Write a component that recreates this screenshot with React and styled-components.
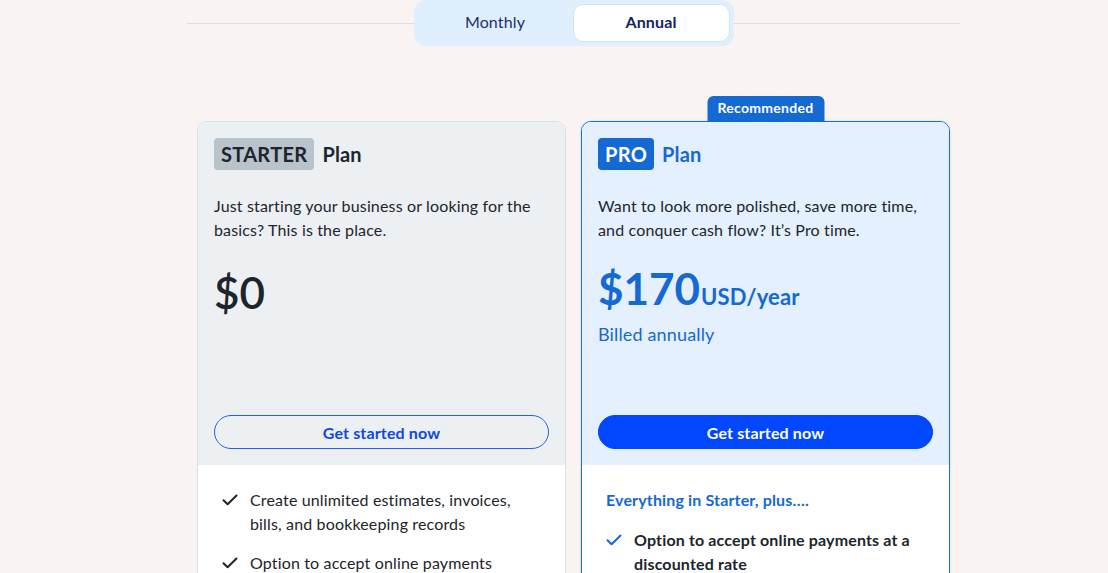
import React from "react";
import styled, { createGlobalStyle } from "styled-components";

const Global = createGlobalStyle`
  html, body { margin: 0; padding: 0; overflow: hidden; }
  body {
    background: #f9f4f1;
    font-family: Lato, "Noto Sans", sans-serif;
    color: #1c252c;
    letter-spacing: 0.15px;
  }
  * { box-sizing: border-box; }
`;

const Page = styled.div`
  width: 773px;
  margin-left: 187px;
`;

const ToggleRow = styled.div`
  display: flex;
  align-items: center;
  height: 46px;
`;

const Rule = styled.div`
  flex: 1;
  height: 1px;
  background: #d3e0ec;
`;

const Toggle = styled.div`
  display: flex;
  width: 320px;
  height: 46px;
  padding: 4px;
  background: #dfeffd;
  border-radius: 12px;
`;

const ToggleOption = styled.button`
  flex: 1;
  padding: 0 0 3px;
  border: ${(p) => (p.$active ? "1px solid #d3e3f1" : "none")};
  background: ${(p) => (p.$active ? "#ffffff" : "transparent")};
  box-shadow: ${(p) => (p.$active ? "0 0 0 1px #e3eef8" : "none")};
  border-radius: 10px;
  font-family: inherit;
  letter-spacing: inherit;
  font-size: 16px;
  font-weight: ${(p) => (p.$active ? 700 : 400)};
  color: ${(p) => (p.$active ? "#16245e" : "#1f2d6a")};
  cursor: pointer;
`;

const Cards = styled.div`
  display: grid;
  grid-template-columns: 369px 369px;
  gap: 15px;
  margin: 75px 0 0 10px;
`;

const Card = styled.div`
  position: relative;
  border: 1px solid ${(p) => (p.$pro ? "#176fdc" : "#d6e0ea")};
  border-radius: 10px;
  background: #ffffff;
  box-shadow: ${(p) => (p.$pro ? "0 0 3px rgba(23,111,220,0.18)" : "none")};
`;

const Tab = styled.div`
  position: absolute;
  top: -26px;
  left: 50%;
  transform: translateX(-50%);
  width: 117px;
  height: 26px;
  padding-bottom: 3px;
  background: #1469d3;
  color: #ffffff;
  font-size: 14px;
  font-weight: 700;
  display: flex;
  align-items: center;
  justify-content: center;
  border-radius: 6px 6px 0 0;
  letter-spacing: 0.3px;
`;

const Top = styled.div`
  height: 343px;
  padding: 16px;
  display: flex;
  flex-direction: column;
  background: ${(p) => (p.$pro ? "#e4f0fd" : "#edf0f3")};
  border-radius: 9px 9px 0 0;
`;

const Header = styled.div`
  display: flex;
  align-items: center;
  gap: 8px;
  height: 32px;
`;

const Badge = styled.span`
  height: 32px;
  padding: 0 7px;
  display: inline-flex;
  align-items: center;
  border-radius: 4px;
  font-size: 20px;
  font-weight: 700;
  letter-spacing: 0.3px;
  background: ${(p) => (p.$pro ? "#1469d3" : "#b8c3cc")};
  color: ${(p) => (p.$pro ? "#ffffff" : "#1c252c")};
`;

const PlanWord = styled.span`
  font-size: 20px;
  font-weight: 700;
  color: ${(p) => (p.$pro ? "#1469d3" : "#1c252c")};
`;

const Desc = styled.p`
  margin: 24px 0 0;
  font-size: 16px;
  line-height: 24px;
  color: #1c252c;
`;

const PriceRow = styled.div`
  display: flex;
  align-items: baseline;
  margin-top: ${(p) => (p.$pro ? "20px" : "24px")};
  color: ${(p) => (p.$pro ? "#1469d3" : "#1c252c")};
`;

const Amount = styled.span`
  font-size: 44px;
  line-height: 1.2;
  letter-spacing: 0;
  font-weight: ${(p) => (p.$pro ? 700 : 600)};
`;

const Unit = styled.span`
  font-size: 22px;
  font-weight: 700;
  margin-left: 1px;
`;

const Billed = styled.div`
  margin-top: 7px;
  font-size: 18px;
  line-height: 24px;
  color: #1469d3;
`;

const CTA = styled.button`
  margin-top: auto;
  height: 34px;
  width: 100%;
  border-radius: 17px;
  font-family: inherit;
  letter-spacing: inherit;
  font-size: 16px;
  font-weight: 700;
  cursor: pointer;
  border: 1px solid ${(p) => (p.$solid ? "#0047ff" : "#1f5ef2")};
  background: ${(p) => (p.$solid ? "#0047ff" : "transparent")};
  color: ${(p) => (p.$solid ? "#ffffff" : "#0c47ee")};
`;

const Features = styled.div`
  padding: 23px 24px 24px 24px;
`;

const Lead = styled.div`
  font-size: 16px;
  line-height: 24px;
  font-weight: 700;
  color: #1469d3;
  margin-bottom: 16px;
`;

const List = styled.ul`
  list-style: none;
  margin: 0;
  padding: 0;
  display: flex;
  flex-direction: column;
  gap: 15px;
`;

const Item = styled.li`
  display: flex;
  gap: 12px;
  font-size: 16px;
  line-height: 24px;
  font-weight: ${(p) => (p.$bold ? 700 : 400)};
  color: #1c252c;
`;

const CheckBox = styled.span`
  flex: 0 0 16px;
  height: 24px;
  display: flex;
  align-items: center;
  color: ${(p) => (p.$pro ? "#1469d3" : "#1c252c")};
`;

const Check = ({ pro }) => (
  <CheckBox $pro={pro}>
    <svg width="16" height="12" viewBox="0 0 16 12" fill="none">
      <path d="M1.5 6.2 L5.6 10.2 L14.5 1.5" stroke="currentColor" strokeWidth="2" strokeLinecap="round" strokeLinejoin="round" />
    </svg>
  </CheckBox>
);

export default function App() {
  return (
    <>
      <Global />
      <Page>
        <ToggleRow>
          <Rule />
          <Toggle>
            <ToggleOption>Monthly</ToggleOption>
            <ToggleOption $active>Annual</ToggleOption>
          </Toggle>
          <Rule />
        </ToggleRow>
        <Cards>
          <Card>
            <Top>
              <Header>
                <Badge>STARTER</Badge>
                <PlanWord>Plan</PlanWord>
              </Header>
              <Desc>Just starting your business or looking for the basics? This is the place.</Desc>
              <PriceRow>
                <Amount>$0</Amount>
              </PriceRow>
              <CTA>Get started now</CTA>
            </Top>
            <Features>
              <List>
                <Item>
                  <Check />
                  <span>Create unlimited estimates, invoices, bills, and bookkeeping records</span>
                </Item>
                <Item>
                  <Check />
                  <span>Option to accept online payments</span>
                </Item>
                <Item>
                  <Check />
                  <span>Track income and expenses</span>
                </Item>
              </List>
            </Features>
          </Card>
          <Card $pro>
            <Tab>Recommended</Tab>
            <Top $pro>
              <Header>
                <Badge $pro>PRO</Badge>
                <PlanWord $pro>Plan</PlanWord>
              </Header>
              <Desc>Want to look more polished, save more time, and conquer cash flow? It’s Pro time.</Desc>
              <PriceRow $pro>
                <Amount $pro>$170</Amount>
                <Unit>USD/year</Unit>
              </PriceRow>
              <Billed>Billed annually</Billed>
              <CTA $solid>Get started now</CTA>
            </Top>
            <Features>
              <Lead>Everything in Starter, plus….</Lead>
              <List>
                <Item $bold>
                  <Check pro />
                  <span>Option to accept online payments at a discounted rate</span>
                </Item>
                <Item $bold>
                  <Check pro />
                  <span>Auto-import bank transactions</span>
                </Item>
              </List>
            </Features>
          </Card>
        </Cards>
      </Page>
    </>
  );
}
